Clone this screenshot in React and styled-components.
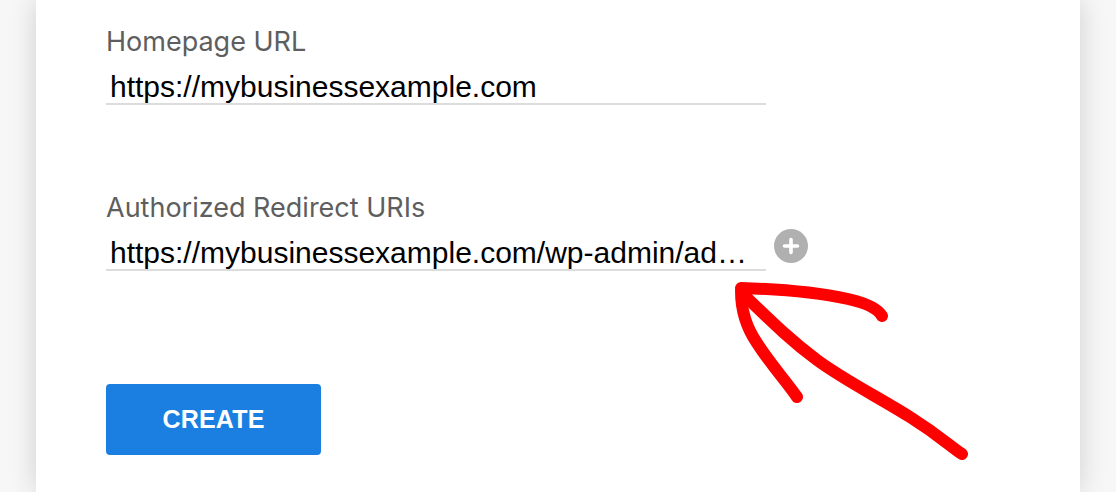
import React from "react";
import styled, { createGlobalStyle } from "styled-components";

const GlobalStyle = createGlobalStyle`
  html, body {
    margin: 0;
    padding: 0;
    background: #f7f7f7;
  }
  #root {
    height: 492px;
    overflow: hidden;
  }
`;

const Page = styled.div`
  position: relative;
  height: 492px;
  padding: 0 36px;
  box-sizing: border-box;
`;

const Card = styled.div`
  height: 100%;
  background: #fff;
  box-shadow: 0 0 26px rgba(0, 0, 0, 0.16);
  padding: 26px 0 0 70px;
  box-sizing: border-box;
  display: flex;
  flex-direction: column;
`;

const Field = styled.div`
  display: flex;
  flex-direction: column;
  margin-bottom: ${(p) => p.$gap || 0}px;
`;

const Label = styled.label`
  font-family: "Inter", "Open Sans", sans-serif;
  font-size: 27px;
  line-height: 32px;
  color: #5e5e5e;
`;

const InputRow = styled.div`
  display: flex;
  align-items: center;
  gap: 8px;
`;

const TextInput = styled.div`
  width: 660px;
  box-sizing: border-box;
  padding: 14px 4px 1px;
  font-family: "Liberation Sans", Arial, sans-serif;
  font-size: 30px;
  line-height: 30px;
  color: #000;
  border-bottom: 2px solid #dcdcdc;
  white-space: nowrap;
  overflow: hidden;
  text-overflow: ellipsis;
`;

const AddButton = styled.button`
  width: 34px;
  height: 34px;
  border-radius: 50%;
  border: none;
  padding: 0;
  background: #b0b0b0;
  display: grid;
  place-items: center;
  cursor: pointer;
  margin-top: -3px;
`;

const CreateButton = styled.button`
  width: 215px;
  height: 71px;
  border: none;
  border-radius: 4px;
  background: #1a7fe0;
  color: #fff;
  font-family: "Liberation Sans", Arial, sans-serif;
  font-weight: 700;
  font-size: 25px;
  letter-spacing: 0.2px;
  cursor: pointer;
`;

const Annotation = styled.svg`
  position: absolute;
  inset: 0;
  width: 1116px;
  height: 492px;
  pointer-events: none;
`;

const PlusIcon = () => (
  <svg width="18" height="18" viewBox="0 0 18 18">
    <path d="M9 2.5v13M2.5 9h13" stroke="#fff" strokeWidth="3.6" strokeLinecap="round" />
  </svg>
);

export default function App() {
  return (
    <>
      <GlobalStyle />
      <Page>
        <Card>
          <Field $gap={87}>
            <Label>Homepage URL</Label>
            <InputRow>
              <TextInput>https://mybusinessexample.com</TextInput>
            </InputRow>
          </Field>
          <Field $gap={113}>
            <Label>Authorized Redirect URIs</Label>
            <InputRow>
              <TextInput>https://mybusinessexample.com/wp-admin/admin.php?page=wpforms-settings</TextInput>
              <AddButton aria-label="Add URI">
                <PlusIcon />
              </AddButton>
            </InputRow>
          </Field>
          <div>
            <CreateButton>CREATE</CreateButton>
          </div>
        </Card>
        <Annotation viewBox="0 0 1116 492">
          <g fill="none" stroke="#ff0000" strokeWidth="12" strokeLinecap="round" strokeLinejoin="round">
            <path d="M743 294 C 770 320 790 340 817 360 S 880 398 910 417 S 950 446 962 454" />
            <path d="M741 288 C 775 289 815 292 848 299 C 866 303 878 309 882 316" />
            <path d="M741 291 C 741 310 746 327 757 343 C 771 365 786 381 797 397" />
          </g>
        </Annotation>
      </Page>
    </>
  );
}
